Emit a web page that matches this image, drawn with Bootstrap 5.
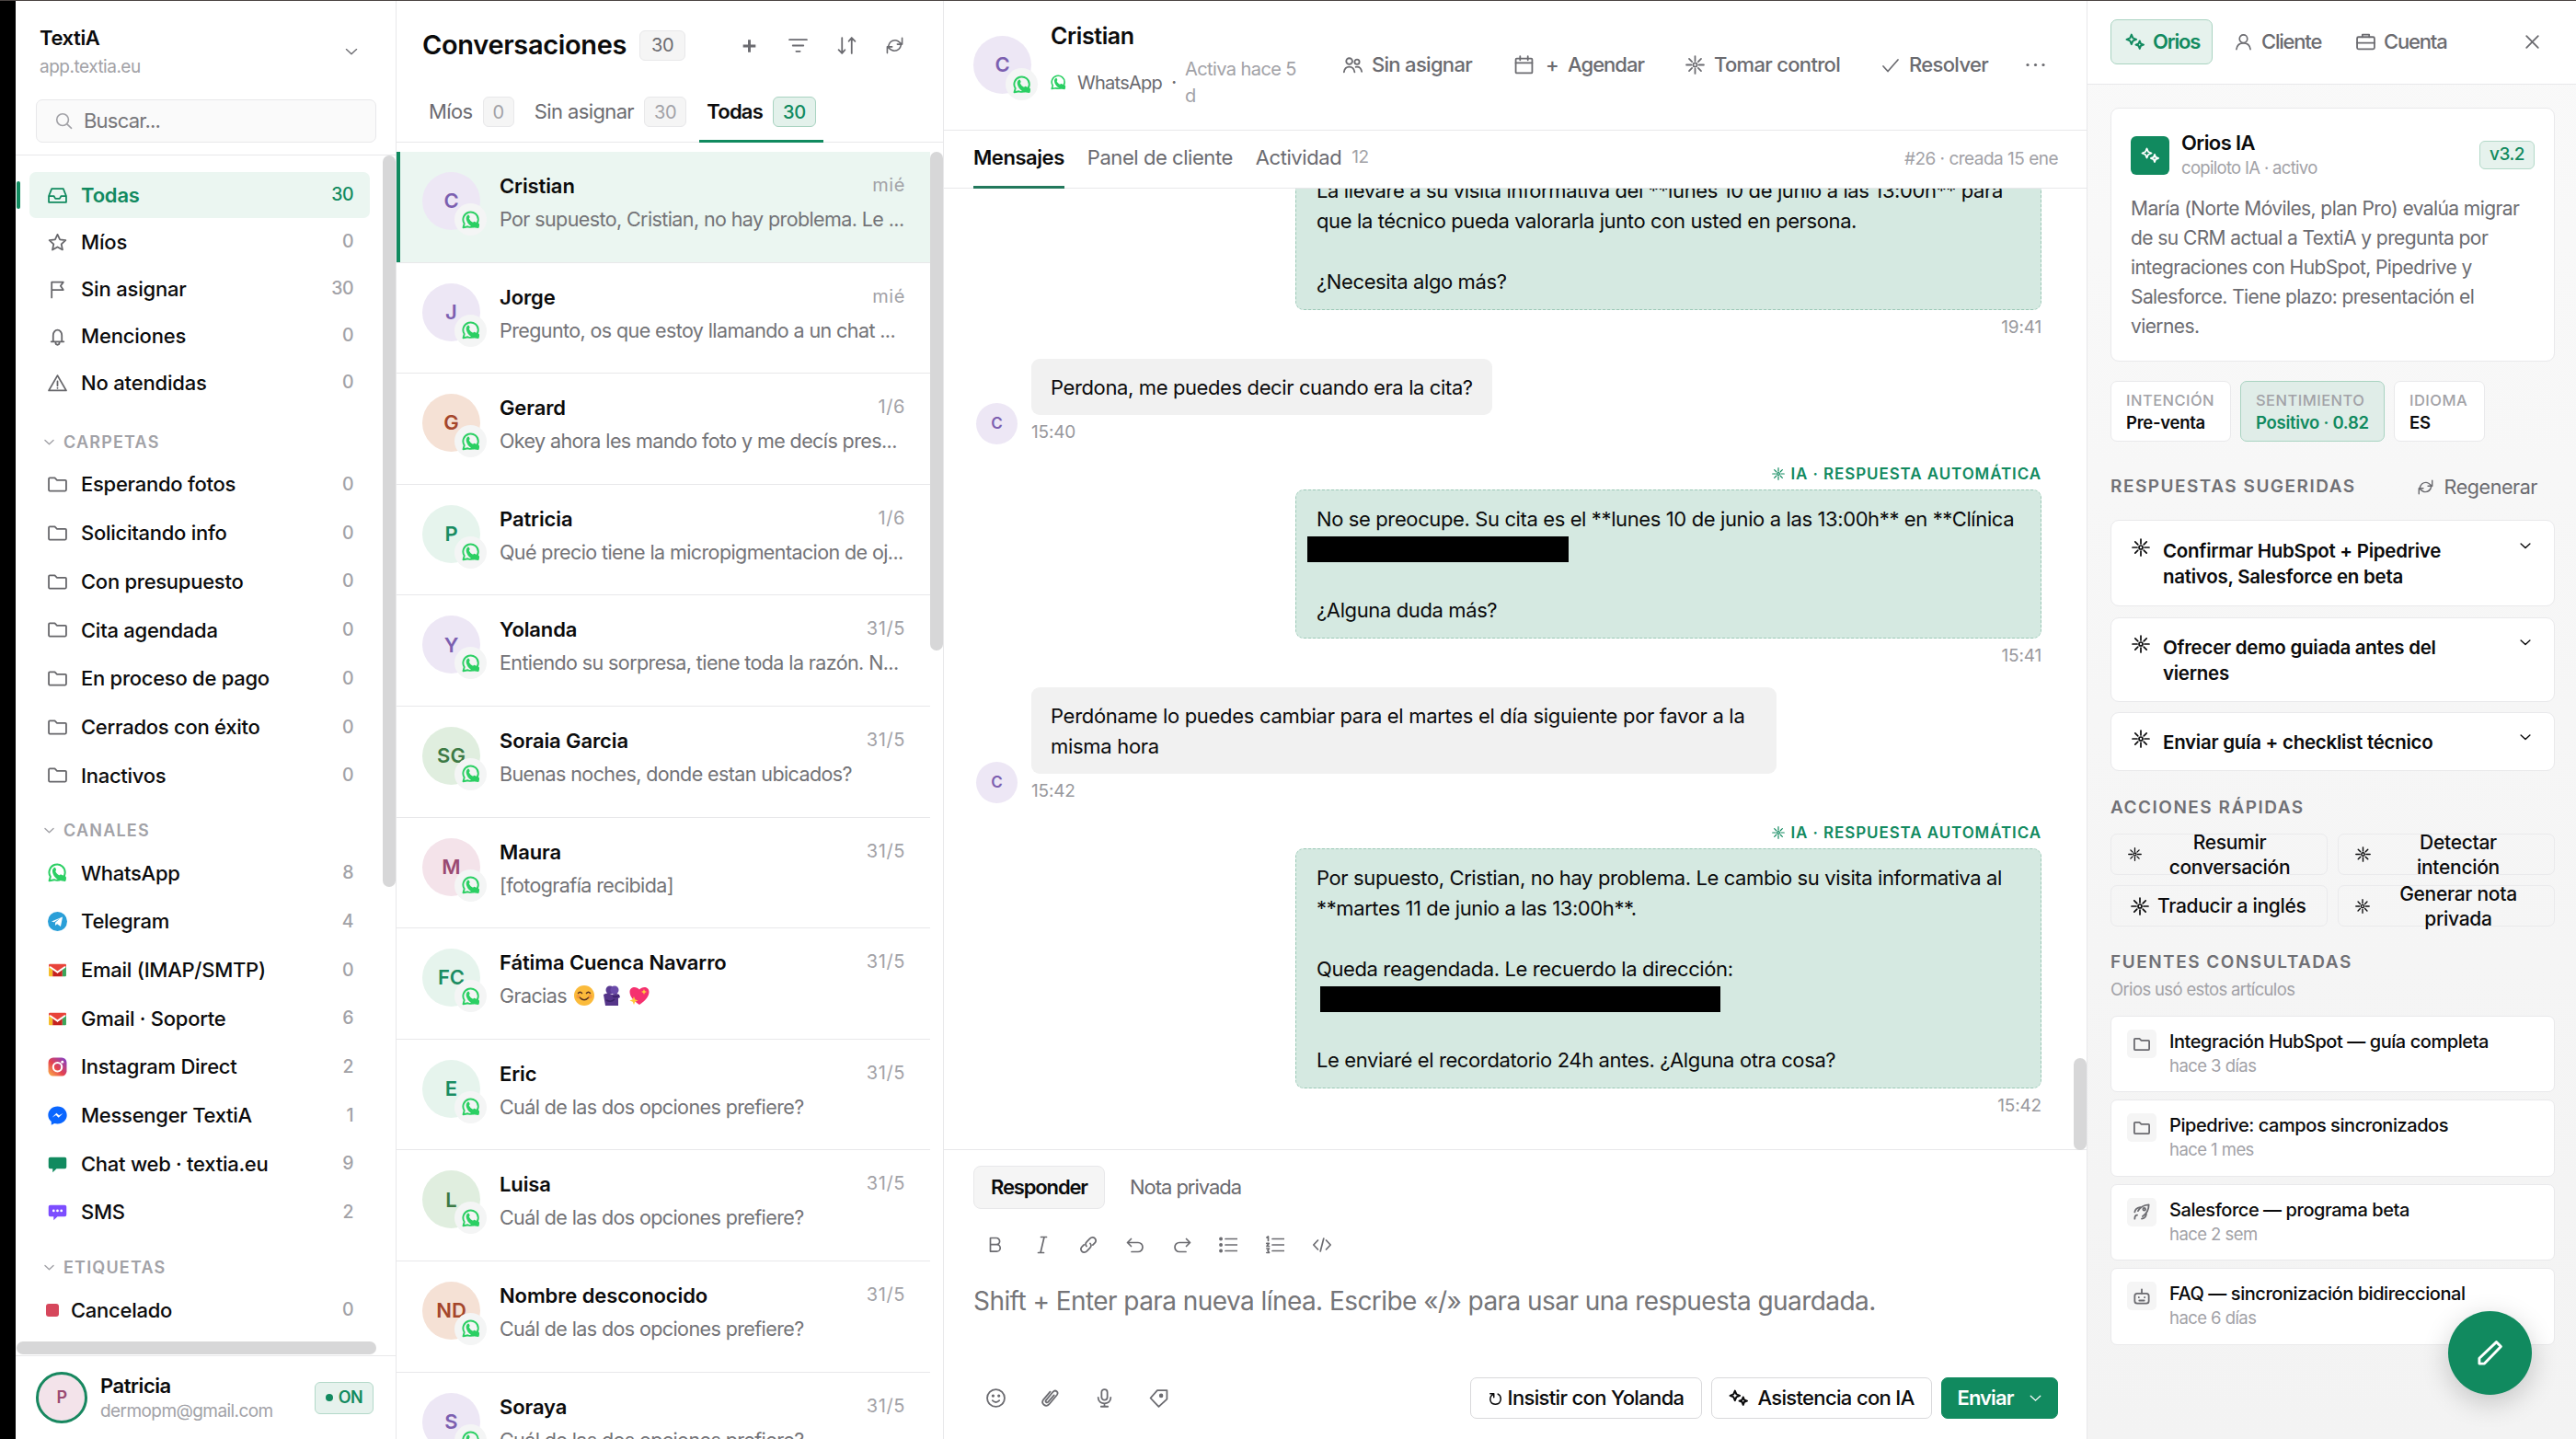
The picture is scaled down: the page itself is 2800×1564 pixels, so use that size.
<!DOCTYPE html>
<html lang="es">
<head>
<meta charset="utf-8">
<title>TextiA · Conversaciones</title>
<meta name="viewport" content="width=device-width, initial-scale=1">
<link rel="stylesheet" href="https://cdn.jsdelivr.net/npm/bootstrap@5.3.0/dist/css/bootstrap.min.css">
<style>
:root{--brand:#118a5f;--ink:#0b0b0c;--mid:#6b6b70;--soft:#a2a2a7;--line:#e8e8ea;--tint:#ebf6f1}
html,body{height:100%}
body{font-family:Inter,"Liberation Sans",sans-serif;font-size:22px;line-height:1.3;color:var(--ink);background:#fff;letter-spacing:-.02em;overflow:hidden}
svg{display:block;flex:none}
.ic{width:21px;height:21px;fill:none;stroke:currentColor;stroke-width:1.7;stroke-linecap:round;stroke-linejoin:round}
.app{height:1564px;width:2800px}
.topline{height:1px;background:#4a4442;z-index:9}
.gutter{width:17px;background:#000}
.t-mid{color:var(--mid)}.t-soft{color:var(--soft)}.t-brand{color:var(--brand)}
.sub19{font-size:19px;letter-spacing:-.03em}
.thumb{position:absolute;background:#d7d7d8;border-radius:8px}
/* sidebar */
.side{width:414px;border-right:1px solid var(--line)}
.side-head{height:169px;border-bottom:1px solid var(--line);padding:27px 21px 0 22px}
.ws-name{font-size:22px;line-height:28px;letter-spacing:-.018em}
.ws-sub{font-size:19px;line-height:24px;margin-top:6px;letter-spacing:-.026em}
.search-box{height:47px;margin-top:23px;border:1px solid var(--line);border-radius:7px;background:#fafafa;padding-left:20px;gap:12px;color:#77777b;letter-spacing:-.035em}
.nav-main{padding-top:18px;padding-bottom:5px}
.nav-row{height:50px;margin:0 28px 1px 15px;padding:0 18px 0 20px;border-radius:7px;font-weight:500;font-size:22px;letter-spacing:-.008em;gap:15px}
.nav-row .cnt{color:var(--soft);font-size:19.5px;font-weight:500;letter-spacing:-.03em}
.nav-row>svg{color:#66666a}
.nav-row.on{background:var(--tint);color:var(--brand);font-weight:600}
.nav-row.on svg,.nav-row.on .cnt{color:var(--brand)}
.nav-row.on::before{content:"";position:absolute;left:1px;width:4px;height:30px;border-radius:2px;background:var(--brand)}
.nav-row.sub{height:52.7px;margin-bottom:0;letter-spacing:-.012em}
.grp{height:40.4px;margin-top:13px;padding-left:30px;gap:9px;font-size:18px;font-weight:600;letter-spacing:.066em;color:var(--soft)}
.side-foot{height:91px;border-top:1px solid var(--line);padding:0 24px 0 22px}
.me{width:56px;height:56px;border-radius:50%;border:3px solid #17875f;background:#f3e3ea;color:#9a4a72;font-size:18px;font-weight:600}
.pill-on{width:64px;height:35px;border:1px solid #b3d9c9;border-radius:6px;background:#e6f2ed;color:var(--brand);font-size:18px;font-weight:600;gap:6px}
/* list */
.list-col{width:595px;border-right:1px solid var(--line)}
.list-head{height:85px;padding:13px 43px 0 28px}
.list-title{font-size:29px;font-weight:600;letter-spacing:-.012em}
.cbadge{height:33px;min-width:34px;padding:0 12px;border:1px solid var(--line);border-radius:6px;background:#f5f5f5;font-size:20px;font-weight:400;color:var(--mid);letter-spacing:-.02em}
.tabs{height:70px;border-bottom:1px solid var(--line);padding-left:27px;gap:6px}
.tb{padding:3px 8px 0;gap:11px;color:var(--mid);margin-bottom:-1px;letter-spacing:-.028em}
.tb .cbadge{padding:0 10px;color:var(--soft)}
.tb.on{color:var(--ink);font-weight:600;box-shadow:inset 0 -3px var(--brand);letter-spacing:-.035em}
.tb.on .cbadge{background:#e3f1eb;border-color:#a9d3c1;color:var(--brand);font-weight:500}
.conv{height:120.6px;width:580px;border-bottom:1px solid var(--line);padding:0 28px}
.conv.on{background:var(--tint);box-shadow:inset 4px 0 var(--brand)}
.av{width:63px;height:63px;border-radius:50%;font-size:22px;font-weight:600;letter-spacing:0}
.av .wa{position:absolute;right:-7px;bottom:-6px;width:35px;height:35px;border-radius:50%;background:#f4f5f5}
.c-nm{font-size:22px;font-weight:600;line-height:28px;letter-spacing:-.005em}
.c-pv{font-size:21.5px;line-height:28px;margin-top:8px;color:#737377;letter-spacing:-.028em}
.c-dt{font-size:20px;line-height:26px;letter-spacing:.03em;margin-right:-1px}
.a-v{background:#ede7f5;color:#7c5fb0}.a-o{background:#f5e1d5;color:#a5462b}.a-g{background:#e6f4ed;color:#1a8c62}.a-l{background:#e0eedf;color:#3d7a45}.a-p{background:#f4e3ea;color:#9a4a72}
/* chat */
.chat{width:1243px;border-right:1px solid var(--line)}
.chat-head{height:142px;border-bottom:1px solid var(--line);padding:0 45px 0 32px}
.chat-head .av .wa{bottom:-7px}
.hname{font-size:25px;font-weight:600;line-height:30px;letter-spacing:-.016em;padding-top:1px}
.hbtn{gap:10px;color:var(--mid);font-weight:500;letter-spacing:-.031em;white-space:nowrap}
.chat-tabs{height:63px;border-bottom:1px solid var(--line);padding:0 31px 0 32px}
.ct{margin-right:25px;padding-bottom:14px;padding-top:10px;color:var(--mid);margin-bottom:-1px}
.ct.on{color:var(--ink);font-weight:600;box-shadow:inset 0 -3px #23785c}
.msgs{height:1045px;padding:0 49px 37.5px 35px;overflow:hidden;border-bottom:1px solid var(--line)}
.m-out{align-self:flex-end;width:811px}
.m-in,.m-out{margin-top:24.5px}
.tag-ia{height:20px;margin-bottom:8px;padding-top:2px;font-size:17px;font-weight:600;color:var(--brand);letter-spacing:.053em;gap:6px;white-space:nowrap}
.bub{font-size:22px;line-height:33px;letter-spacing:-.0175em;border-radius:9px;white-space:nowrap}
.m-out .bub{background:#d5e9e1;border:1px dashed #9cc9b7;padding:14.5px 20px 13.5px 22px}
.m-in .bub{background:#f1f1f1;padding:14.5px 21px 13.5px;width:fit-content}
.tm{font-size:19px;line-height:24px;margin-top:6.5px;margin-bottom:-2px;color:#98989d;letter-spacing:-.01em}
.av-s{width:45px;height:45px;margin-bottom:-3px;font-size:17px}
.redact{display:inline-block;background:#000;vertical-align:middle;height:28px;margin-top:-4px}
.redact.r1{width:284px;margin-left:-10px}
.redact.r2{width:435px;margin-left:4px}
.composer{height:313px;padding:17px 31px 0 32px}
.rt{height:47px;padding:0 18px;border:1px solid transparent;border-radius:8px;letter-spacing:-.047em;color:var(--mid)}
.rt.on{background:#f5f5f5;border-color:var(--line);color:var(--ink);font-weight:600;letter-spacing:-.052em}
.tools{height:40px;margin-top:19px;padding-left:14px;gap:30.7px;color:var(--mid)}
.tools .ic{width:20px;height:20px}
.ph{font-size:28px;line-height:38px;margin-top:22px;color:#757578;letter-spacing:-.02em}
.acts{height:45px;margin-top:64px;color:var(--mid)}
.abtn{height:45px;border:1px solid #d9d9db;border-radius:7px;background:#fff;color:var(--ink);font-weight:500;font-size:22px;letter-spacing:-.03em;gap:10px}
.abtn.send{background:var(--brand);border-color:var(--brand);color:#fff;font-weight:600;gap:16px;letter-spacing:-.041em}
/* assistant panel */
.panel{width:531px;background:linear-gradient(#f9f9f9,#f3f3f3)}
.p-head{height:92px;background:#fff;border-bottom:1px solid var(--line);padding:0 37px 0 25px}
.pt{height:49px;border:1px solid transparent;border-radius:7px;color:var(--mid);font-weight:500;letter-spacing:-.055em}
.pt.on{width:111px;background:#e6f2ed;border-color:#a9d3c1;color:var(--brand);font-weight:600;padding-left:15px;gap:9px}
.p-body{padding:25px 23px 0 25px}
.bx{background:#fff;border:1px solid #e9e9eb;border-radius:9px}
.intro{height:276px;padding:24px 21px 0}
.logo{width:42px;height:42px;border-radius:6px;background:var(--brand);color:#fff}
.ver{width:60px;height:31px;border:1px solid #b3d9c9;border-radius:6px;background:#e6f2ed;color:var(--brand);font-size:19px;font-weight:500}
.summary{font-size:21px;line-height:32px;margin-top:16px;color:#6c6c71;letter-spacing:-.028em;white-space:nowrap}
.chip{height:66px;padding:9.5px 16px 0;border-radius:7px}
.chip .k{font-size:16.5px;line-height:20px;font-weight:500;letter-spacing:.028em;color:var(--soft)}
.chip .v{font-size:18.5px;line-height:24px;margin-top:2px;font-weight:600;letter-spacing:-.015em}
.chip.good{background:#e0ede8;border-color:#a9d3c1}
.h-sec{font-size:19px;line-height:26px;font-weight:600;letter-spacing:.079em;color:#707075}
.sug{padding:19px 24px 0 22px;margin-bottom:11.5px;font-size:20.5px;line-height:28px;font-weight:600;letter-spacing:-.013em}
.sug .ic{width:20px;height:20px}
.sug .ic.cv{width:14px;height:14px;margin-top:1px;stroke-width:2}
.qa{height:45px;width:236px;border:1px solid #eaeaec;border-radius:7px;font-size:21px;line-height:27px;font-weight:500;letter-spacing:-.014em}
.src{height:83.4px;padding:14px 17px 0;margin-bottom:8px;border-radius:7px;gap:14px}
.src-ic{width:32px;height:31px;border-radius:5px;background:#f5f5f5;color:var(--mid)}
.src .ic{width:18px;height:18px;stroke-width:2}
.src .n{font-size:20px;line-height:26px;font-weight:500;letter-spacing:-.022em}
.src .d{font-size:18.5px;line-height:24px;margin-top:1px;letter-spacing:-.03em}
.fab{position:absolute;right:48px;bottom:48px;width:91px;height:91px;border-radius:50%;background:var(--brand);color:#fff;box-shadow:0 8px 30px rgba(0,0,0,.2)}
</style>
</head>
<body>
<svg width="0" height="0" class="position-absolute">
<defs>
<symbol id="chev" viewBox="0 0 20 20"><path d="M3 7l7 6.500L17 7"/></symbol>
<symbol id="search" viewBox="0 0 20 20"><circle cx="8.5" cy="8.5" r="6.7"/><path d="M13.5 13.5l5 4.7"/></symbol>
<symbol id="inbox" viewBox="0 0 20 20"><path d="M1 10.5L4 3h12l3 7.5V17H1zM1 10.5h5.2l1.6 2.7h4.4l1.6-2.7H19"/></symbol>
<symbol id="star" viewBox="0 0 20 20"><path d="M10 1.8l2.5 5.3 5.9.7-4.4 4 1.2 5.8L10 14.7l-5.2 2.9L6 11.8l-4.4-4 5.9-.7z"/></symbol>
<symbol id="flag" viewBox="0 0 20 20"><path d="M4 18.5V2.5h12l-2.8 4 2.8 4H4"/></symbol>
<symbol id="bell" viewBox="0 0 20 20"><path d="M3.500 15.500h13M5.500 15.500V9a4.500 5.500 0 0 1 9 0v6.500M8 15.500v1a2 2.300 0 0 0 4 0v-1"/></symbol>
<symbol id="warn" viewBox="0 0 20 20"><path d="M10 2l9 15.500H1zM10 8v4.500M10 14.800v.2"/></symbol>
<symbol id="folder" viewBox="0 0 20 20"><path d="M1 15.500V4.200q0-1 1-1h5.200l2.300 2.300H18q1 0 1 1v9q0 1.200-1 1.200H2q-1 0-1-1.200z"/></symbol>
<symbol id="wapp" viewBox="0 0 20 20"><path d="M1.500 18.300l1.200-4.200A8.200 8.200 0 1 1 6.600 17.300z" fill="none" stroke="#2bcf63" stroke-width="1.900" stroke-linejoin="round"/><path d="M6.200 4.900c.8-.7 1.500-.4 1.800.4l.6 1.500c.3.700-.9 1.200-.7 1.800.9 2 2 3.200 3.800 4 .7.300 1.200-1 1.900-.8l5 2.300c.7.400.5 4.700-.7 5l-5.400-.9C8.700 17 4.600 12 4.700 8c0-1.300.7-2.400 1.500-3.100z" fill="#2bcf63" stroke="none"/><path d="M12.500 17.200q3.500-.7 4.800-4" fill="none" stroke="#2bcf63" stroke-width="2"/></symbol>
<symbol id="tele" viewBox="0 0 20 20"><circle cx="10" cy="10" r="10" fill="#2a9fd8"/><path d="M3.800 9.900l11.500-4.700-2 10-3.700-2.700-2 1.900.1-3.300 5-4.400-6.200 3.900z" fill="#fff"/></symbol>
<symbol id="gmail" viewBox="0 0 20 20"><path d="M1 6l4 3v7.500H2q-1 0-1-1z" fill="#f6bd27"/><path d="M19 6l-4 3v7.500h3q1 0 1-1z" fill="#3ba55a"/><path d="M5 9l5 4 5-4v7.500H5z" fill="#c5221f"/><path d="M1 4.500q0-1 1-1h16q1 0 1 1v1.500L10 12.500 1 6z" fill="#e8433a"/><path d="M2 6.500L10 12l8-5.500" fill="none" stroke="#fff" stroke-width="1.800"/></symbol>
<symbol id="insta" viewBox="0 0 20 20"><defs><linearGradient id="ig" x1="0" y1="1" x2="1" y2="0"><stop offset="0" stop-color="#fdb64a"/><stop offset=".45" stop-color="#e5414f"/><stop offset="1" stop-color="#7b3fd0"/></linearGradient></defs><rect x=".5" y=".5" width="19" height="19" rx="5" fill="url(#ig)"/><circle cx="10" cy="10.200" r="4.500" fill="none" stroke="#fff" stroke-width="2"/><circle cx="15" cy="5" r="1.400" fill="#fff"/></symbol>
<symbol id="mess" viewBox="0 0 20 20"><path d="M10 .5C4.500.5.300 4.500.300 9.500c0 2.700 1.300 5 3.300 6.600v3.700l3.200-1.700c1 .3 2 .4 3.200.4 5.500 0 9.700-4 9.700-9S15.500.5 10 .5z" fill="#0a66ff"/><path d="M4.500 11.800l4.400-4.500 2.700 2.500 4-2.300-4.500 4.600-2.600-2.500z" fill="#fff"/></symbol>
<symbol id="webchat" viewBox="0 0 20 20"><path d="M2.500 2.500h15q1.800 0 1.800 1.800v8.400q0 1.800-1.800 1.800H9l-4 3.800v-3.800H2.500Q.700 14.500.700 12.700V4.300q0-1.800 1.800-1.800z" fill="#118a5f"/></symbol>
<symbol id="sms" viewBox="0 0 20 20"><path d="M2.500 2.500h15q1.800 0 1.800 1.800v8.400q0 1.800-1.800 1.800H10l-4 3.800v-3.800H2.500Q.700 14.500.700 12.700V4.300q0-1.800 1.800-1.800z" fill="#7c4dff"/><g fill="#fff"><circle cx="6" cy="8.500" r="1.300"/><circle cx="10" cy="8.500" r="1.300"/><circle cx="14" cy="8.500" r="1.300"/></g></symbol>
<symbol id="filter" viewBox="0 0 20 20"><path d="M1 4h18M4.500 10h11M8 16h4"/></symbol>
<symbol id="sort" viewBox="0 0 20 20"><path d="M5 2v16M1.500 14.500L5 18l3-3.500M15 18V2M12 5.500L15 2l3.500 3.500"/></symbol>
<symbol id="refresh" viewBox="0 0 20 20"><path d="M1.500 18.500v-7h5.500M18.500 1.500v7H13M2.500 11.500C3.500 7 6.500 4 10.500 4c3 0 4.500 1.500 7.300 4.300M17.500 8.500c-1 4.500-4 7.500-8 7.500-3 0-4.500-1.500-7.300-4.300"/></symbol>
<symbol id="users" viewBox="0 0 20 20"><circle cx="6.300" cy="6.300" r="3.200"/><circle cx="14.300" cy="7" r="2.500"/><path d="M.8 17.500c.5-3.500 2.500-5.500 5.500-5.500s5 2 5.500 5.500M13 12.200c3.500-.6 5.500 1.300 6.200 4.800"/></symbol>
<symbol id="cal" viewBox="0 0 20 20"><rect x="1.500" y="3.500" width="17" height="15" rx="1"/><path d="M1.500 8h17M6 1v4M14 1v4"/></symbol>
<symbol id="spark" viewBox="0 0 20 20"><circle cx="10" cy="10" r="2"/><path d="M10 1v5M10 14v5M1 10h5M14 10h5M3.800 3.800l3 3M13.200 13.200l3 3M16.200 3.800l-3 3M6.800 13.200l-3 3"/></symbol>
<symbol id="check" viewBox="0 0 20 20"><path d="M2 11l5 5.500L18 4"/></symbol>
<symbol id="stars" viewBox="0 0 20 20"><path d="M6.500 2.500l1.500 3.500 3.500 1.500L8 9l-1.500 3.500L5 9 1.500 7.500 5 6zM15 9l1.100 2.900L19 13l-2.900 1.100L15 17l-1.100-2.900L11 13l2.900-1.100z" stroke-width="1.900"/></symbol>
<symbol id="user" viewBox="0 0 20 20"><circle cx="10" cy="6.500" r="4.500"/><path d="M2 18.500c.7-4.500 3.500-7 8-7s7.300 2.500 8 7"/></symbol>
<symbol id="brief" viewBox="0 0 20 20"><rect x="1" y="5" width="18" height="12.500" rx="1.500"/><path d="M1 11h18M6.500 5V2.500h7V5"/></symbol>
<symbol id="x" viewBox="0 0 20 20"><path d="M4 4l12 12M16 4L4 16"/></symbol>
<symbol id="bold" viewBox="0 0 20 20"><path d="M4.500 2.500h6.500a3.600 3.600 0 0 1 0 7.200H4.500zM4.500 9.700h7a3.700 3.700 0 0 1 0 7.400h-7z"/></symbol>
<symbol id="ital" viewBox="0 0 20 20"><path d="M8.500 1.500h6M5.500 18.500h6M12 1.500l-4 17"/></symbol>
<symbol id="link" viewBox="0 0 20 20"><path d="M8 11.500c-1.300-1.500-1-3.500.3-4.800l3.400-3.600c1.600-1.600 4-1.600 5.300-.2 1.400 1.500 1.300 3.700-.2 5.200l-2 2M12 8.500c1.300 1.500 1 3.500-.3 4.800l-3.400 3.600c-1.600 1.600-4 1.600-5.300.2-1.400-1.500-1.300-3.700.2-5.200l2-2"/></symbol>
<symbol id="undo" viewBox="0 0 20 20"><path d="M5.500 3.500L1.500 7.500l4 4M1.500 7.500H13a5 5 0 0 1 0 10H6"/></symbol>
<symbol id="redo" viewBox="0 0 20 20"><path d="M14.500 3.500l4 4-4 4M18.500 7.500H7a5 5 0 0 0 0 10h7"/></symbol>
<symbol id="ul" viewBox="0 0 20 20"><path d="M7 3.500h13M7 10h13M7 16.500h13"/><path d="M2 3.500h.1M2 10h.1M2 16.500h.1" stroke-width="3.800"/></symbol>
<symbol id="ol" viewBox="0 0 20 20"><path d="M7 3.500h13M7 10h13M7 16.500h13M1 2l1.500-1v4.500M.8 8.300h2.500L1 11.500h2.500M.8 14h2.700L2 16l1.500 2.500H.8"/></symbol>
<symbol id="code" viewBox="0 0 20 20"><path d="M5.500 5L.8 10l4.700 5M14.500 5l4.700 5-4.700 5M11.800 3L8.200 17"/></symbol>
<symbol id="smile" viewBox="0 0 20 20"><circle cx="10" cy="10" r="9"/><path d="M6.500 12.500q3.500 3.500 7 0"/><path d="M7 7.700h.1M13 7.700h.1" stroke-width="3"/></symbol>
<symbol id="clip" viewBox="0 0 20 20"><path d="M14 7l-6 7c-1.500 1.500-3.500-.2-2.300-1.800l7.200-8.600c2.600-2.800 6.300.3 4 3.300l-8 9.500c-3.500 3.800-9-.7-5.800-4.900L10 3.500"/></symbol>
<symbol id="mic" viewBox="0 0 20 20"><rect x="7" y="1" width="6" height="11" rx="3"/><path d="M3.500 9.500c0 8 13 8 13 0M10 15.500v3M6.500 18.800h7"/></symbol>
<symbol id="tag" viewBox="0 0 20 20"><path d="M1.500 10L8.500 2h10V11L10 19z"/><circle cx="12.500" cy="7.500" r="1.300" fill="currentColor"/></symbol>
<symbol id="rocket" viewBox="0 0 20 20"><path d="M5.500 9C8 4.500 12 2 18.500 1.500 18.500 8 16 12.500 11 15.500M8 4.500C4 5 2 7 1.500 10.500M15.500 12C15.500 15.500 13.500 18 10 18.500M1.500 18.500c0-3 1-4.500 3-4.500"/><circle cx="13" cy="7" r="1.500"/></symbol>
<symbol id="bot" viewBox="0 0 20 20"><rect x="1.500" y="6.500" width="17" height="12" rx="3"/><path d="M10 6.500V1.500M7 15h6M6.500 11v.3M13.500 11v.3"/></symbol>
<symbol id="pen" viewBox="0 0 20 20"><path d="M2 18v-4L14.800 1.800l3.400 3.400L5.800 18z"/></symbol>
<symbol id="e-smile" viewBox="0 0 22 22"><circle cx="11" cy="11" r="11" fill="#fbbb3b"/><path d="M4.500 8.500q2-2.500 4 0M13.500 8.500q2-2.500 4 0M6 13q5 5.500 10 0" fill="none" stroke="#5b3420" stroke-width="1.600" stroke-linecap="round"/><circle cx="4.500" cy="12" r="2.200" fill="#f78a3c" opacity=".6"/><circle cx="17.500" cy="12" r="2.200" fill="#f78a3c" opacity=".6"/></symbol>
<symbol id="e-hug" viewBox="0 0 22 22"><circle cx="9" cy="5" r="4.500" fill="#5a3b93"/><circle cx="14" cy="5" r="4.500" fill="#6a4aa8"/><path d="M2 10q4-3 9 0 5-2 8 0l1 3-2 1v8H4l-1-6z" fill="#553589"/><path d="M5 16q5 3 9-1M12 12q4 1 7-1" fill="none" stroke="#3b2368" stroke-width="1.600"/></symbol>
<symbol id="e-heart" viewBox="0 0 22 22"><path d="M11 21C4 16 .5 12 .5 7 .5 1 8 .5 11 4.500 14 .5 21.500 1 21.500 7c0 5-3.500 9-10.500 14z" fill="#f5316f"/><path d="M5 12l1.300 3.200L9.500 16.500 6.300 17.800 5 21l-1.300-3.200L.5 16.500l3.200-1.300zM16 4l.9 2.100L19 7l-2.100.9L16 10l-.9-2.100L13 7l2.100-.9z" fill="#ffc93c"/></symbol>
</defs>
</svg>

<div class="topline position-absolute top-0 start-0 w-100"></div>
<div class="app d-flex">
  <div class="gutter flex-shrink-0"></div>

  <aside class="side d-flex flex-column flex-shrink-0 position-relative">
    <div class="side-head flex-shrink-0">
      <div class="d-flex align-items-center justify-content-between pe-3">
        <div class="ps-1">
          <div class="ws-name fw-semibold">TextiA</div>
          <div class="ws-sub t-soft">app.textia.eu</div>
        </div>
        <svg class="ic t-mid" style="width:16px;height:16px;margin-right:3px"><use href="#chev"/></svg>
      </div>
      <div class="search-box d-flex align-items-center"><svg class="ic t-soft" style="width:19px;height:19px"><use href="#search"/></svg><span>Buscar...</span></div>
    </div>
    <nav class="flex-grow-1 overflow-hidden" id="nav"></nav>
    <div class="thumb" style="right:0;top:169px;width:14px;height:795px"></div>
    <div class="thumb" style="left:1px;top:1458px;width:391px;height:14px"></div>
    <div class="side-foot flex-shrink-0 d-flex align-items-center">
      <div class="me d-flex align-items-center justify-content-center flex-shrink-0">P</div>
      <div class="flex-grow-1" style="margin-left:14px">
        <div class="fw-semibold" style="line-height:28px">Patricia</div>
        <div class="sub19 t-soft" style="line-height:27px">dermopm@gmail.com</div>
      </div>
      <div class="pill-on d-flex align-items-center justify-content-center"><svg width="8" height="8"><circle cx="4" cy="4" r="4" fill="#118a5f"/></svg>ON</div>
    </div>
  </aside>

  <section class="list-col d-flex flex-column flex-shrink-0 position-relative">
    <div class="list-head flex-shrink-0 d-flex align-items-center">
      <h1 class="list-title mb-0">Conversaciones</h1>
      <span class="cbadge d-flex align-items-center justify-content-center" style="margin-left:14px">30</span>
      <div class="d-flex align-items-center ms-auto t-mid" style="gap:32px">
        <svg class="ic" viewBox="0 0 20 20"><path d="M10 4v13M3.500 10.500h13" stroke-width="2.800" stroke-linecap="butt"/></svg>
        <svg class="ic"><use href="#filter"/></svg>
        <svg class="ic"><use href="#sort"/></svg>
        <svg class="ic" style="width:19px;height:19px"><use href="#refresh"/></svg>
      </div>
    </div>
    <div class="tabs d-flex flex-shrink-0">
      <div class="tb d-flex align-items-center">Míos<span class="cbadge d-flex align-items-center">0</span></div>
      <div class="tb d-flex align-items-center">Sin asignar<span class="cbadge d-flex align-items-center">30</span></div>
      <div class="tb on d-flex align-items-center">Todas<span class="cbadge d-flex align-items-center">30</span></div>
    </div>
    <div class="flex-grow-1 overflow-hidden" style="padding-top:10px" id="convs"></div>
    <div class="thumb" style="right:0;top:165px;width:14px;height:542px"></div>
  </section>

  <main class="chat d-flex flex-column flex-shrink-0 position-relative">
    <header class="chat-head d-flex align-items-center flex-shrink-0">
      <div class="av a-v position-relative d-flex align-items-center justify-content-center flex-shrink-0">C<span class="wa d-flex align-items-center justify-content-center"><svg width="20" height="20"><use href="#wapp"/></svg></span></div>
      <div style="margin-left:21px;width:285px">
        <div class="hname">Cristian</div>
        <div class="d-flex align-items-center" style="margin-top:7px">
          <svg width="17" height="17"><use href="#wapp"/></svg>
          <span class="t-mid" style="font-size:20px;margin-left:12px;letter-spacing:-.037em">WhatsApp</span><span class="t-mid" style="margin:0 9px 0 10px">·</span>
          <span class="t-soft" style="font-size:20px;line-height:29px;letter-spacing:-.029em">Activa hace 5<br>d</span>
        </div>
      </div>
      <div class="d-flex align-items-center ms-auto">
        <div class="hbtn d-flex align-items-center"><svg class="ic"><use href="#users"/></svg>Sin asignar</div>
        <div class="hbtn d-flex align-items-center" style="margin-left:46px"><svg class="ic"><use href="#cal"/></svg><span style="margin:0 0 0 3px">+</span><span style="letter-spacing:-.045em">Agendar</span></div>
        <div class="hbtn d-flex align-items-center" style="margin-left:45px"><svg class="ic"><use href="#spark"/></svg>Tomar control</div>
        <div class="hbtn d-flex align-items-center" style="margin-left:45px"><svg class="ic" style="width:20px;height:20px"><use href="#check"/></svg>Resolver</div>
        <svg width="21" height="5" fill="#6b6b70" style="margin-left:41px"><circle cx="2" cy="2.500" r="1.600"/><circle cx="10.500" cy="2.500" r="1.600"/><circle cx="19" cy="2.500" r="1.600"/></svg>
      </div>
    </header>
    <div class="chat-tabs d-flex flex-shrink-0">
      <div class="ct on d-flex align-items-center">Mensajes</div>
      <div class="ct d-flex align-items-center">Panel de cliente</div>
      <div class="ct d-flex align-items-center">Actividad<span class="t-soft" style="font-size:19px;margin-left:11px">12</span></div>
      <div class="ms-auto align-self-center t-soft" style="font-size:19px;letter-spacing:-.027em">#26 · creada 15 ene</div>
    </div>
    <div class="msgs d-flex flex-column justify-content-end flex-shrink-0">
      <div class="m-out">
        <div class="bub">La llevaré a su visita informativa del **lunes 10 de junio a las 13:00h** para<br>que la técnico pueda valorarla junto con usted en persona.<br><br>¿Necesita algo más?</div>
        <div class="tm text-end">19:41</div>
      </div>
      <div class="m-in d-flex align-items-end">
        <div class="av av-s a-v d-flex align-items-center justify-content-center">C</div>
        <div style="margin-left:15px"><div class="bub">Perdona, me puedes decir cuando era la cita?</div><div class="tm">15:40</div></div>
      </div>
      <div class="m-out">
        <div class="tag-ia d-flex align-items-center justify-content-end"><svg class="ic" style="width:14px;height:14px"><use href="#spark"/></svg>IA · RESPUESTA AUTOMÁTICA</div>
        <div class="bub">No se preocupe. Su cita es el **lunes 10 de junio a las 13:00h** en **Clínica<br><span class="redact r1"></span><br><br>¿Alguna duda más?</div>
        <div class="tm text-end">15:41</div>
      </div>
      <div class="m-in d-flex align-items-end">
        <div class="av av-s a-v d-flex align-items-center justify-content-center">C</div>
        <div style="margin-left:15px"><div class="bub" style="width:810px;letter-spacing:-.014em">Perdóname lo puedes cambiar para el martes el día siguiente por favor a la<br>misma hora</div><div class="tm">15:42</div></div>
      </div>
      <div class="m-out">
        <div class="tag-ia d-flex align-items-center justify-content-end"><svg class="ic" style="width:14px;height:14px"><use href="#spark"/></svg>IA · RESPUESTA AUTOMÁTICA</div>
        <div class="bub">Por supuesto, Cristian, no hay problema. Le cambio su visita informativa al<br>**martes 11 de junio a las 13:00h**.<br><br>Queda reagendada. Le recuerdo la dirección:<br><span class="redact r2"></span><br><br>Le enviaré el recordatorio 24h antes. ¿Alguna otra cosa?</div>
        <div class="tm text-end">15:42</div>
      </div>
    </div>
    <div class="thumb" style="right:0;top:1150px;width:14px;height:100px"></div>
    <div class="composer">
      <div class="d-flex" style="gap:8px">
        <div class="rt on d-flex align-items-center">Responder</div>
        <div class="rt d-flex align-items-center">Nota privada</div>
      </div>
      <div class="tools d-flex align-items-center">
        <svg class="ic"><use href="#bold"/></svg><svg class="ic"><use href="#ital"/></svg><svg class="ic"><use href="#link"/></svg><svg class="ic"><use href="#undo"/></svg><svg class="ic"><use href="#redo"/></svg><svg class="ic"><use href="#ul"/></svg><svg class="ic"><use href="#ol"/></svg><svg class="ic"><use href="#code"/></svg>
      </div>
      <div class="ph">Shift + Enter para nueva línea. Escribe «/» para usar una respuesta guardada.</div>
      <div class="acts d-flex align-items-center">
        <div class="d-flex" style="padding-left:14px;gap:38px"><svg class="ic"><use href="#smile"/></svg><svg class="ic"><use href="#clip"/></svg><svg class="ic"><use href="#mic"/></svg><svg class="ic"><use href="#tag"/></svg></div>
        <div class="d-flex ms-auto" style="gap:10px">
          <button class="abtn d-flex align-items-center justify-content-center p-0" style="width:252px;gap:6px"><svg class="ic" viewBox="0 0 17 20" style="width:15px;height:18px"><path d="M2 4h4.500v4.500M11.500 4.500c5.500 3 4.500 12.500-3 12.500C.500 17 .500 7.500 6 4.500"/></svg>Insistir con Yolanda</button>
          <button class="abtn d-flex align-items-center justify-content-center p-0" style="width:240px"><svg class="ic"><use href="#stars"/></svg>Asistencia con IA</button>
          <button class="abtn send d-flex align-items-center justify-content-center p-0" style="width:127px"><span>Enviar</span><svg class="ic" style="width:15px;height:15px"><use href="#chev"/></svg></button>
        </div>
      </div>
    </div>
  </main>

  <aside class="panel position-relative">
    <div class="p-head d-flex align-items-center">
      <div class="pt on d-flex align-items-center"><svg class="ic"><use href="#stars"/></svg>Orios</div>
      <div class="pt d-flex align-items-center" style="margin-left:23px;gap:10px"><svg class="ic" style="width:19px;height:19px"><use href="#user"/></svg>Cliente</div>
      <div class="pt d-flex align-items-center" style="margin-left:36px;gap:9px"><svg class="ic"><use href="#brief"/></svg>Cuenta</div>
      <svg class="ic t-mid ms-auto"><use href="#x"/></svg>
    </div>
    <div class="p-body">
      <div class="bx intro">
        <div class="d-flex align-items-center">
          <div class="logo d-flex align-items-center justify-content-center"><svg class="ic" style="width:20px;height:20px"><use href="#stars"/></svg></div>
          <div style="margin-left:13px">
            <div class="fw-semibold" style="line-height:27px;letter-spacing:-.027em">Orios IA</div>
            <div class="t-soft" style="font-size:18.5px;line-height:26px;letter-spacing:-.037em">copiloto IA · activo</div>
          </div>
          <span class="ver ms-auto d-flex align-items-center justify-content-center">v3.2</span>
        </div>
        <div class="summary">María (Norte Móviles, plan Pro) evalúa migrar<br>de su CRM actual a TextiA y pregunta por<br>integraciones con HubSpot, Pipedrive y<br>Salesforce. Tiene plazo: presentación el<br>viernes.</div>
      </div>
      <div class="d-flex" style="gap:10px;margin-top:21px">
        <div class="bx chip" style="width:131px"><div class="k">INTENCIÓN</div><div class="v">Pre-venta</div></div>
        <div class="bx chip good" style="width:157px"><div class="k">SENTIMIENTO</div><div class="v t-brand">Positivo · 0.82</div></div>
        <div class="bx chip" style="width:99px"><div class="k">IDIOMA</div><div class="v">ES</div></div>
      </div>
      <div class="d-flex align-items-center" style="margin-top:35px;padding-right:19px">
        <div class="h-sec">RESPUESTAS SUGERIDAS</div>
        <div class="ms-auto d-flex align-items-center t-mid" style="gap:12px;font-size:21.5px;line-height:28px;letter-spacing:-.02em"><svg class="ic" style="width:17px;height:17px"><use href="#refresh"/></svg>Regenerar</div>
      </div>
      <div style="margin-top:22px">
        <div class="bx sug d-flex align-items-start" style="height:94px"><svg class="ic"><use href="#spark"/></svg><div style="margin-left:14px">Confirmar HubSpot + Pipedrive<br>nativos, Salesforce en beta</div><svg class="ic cv ms-auto"><use href="#chev"/></svg></div>
        <div class="bx sug d-flex align-items-start" style="height:92px;padding-top:18px"><svg class="ic"><use href="#spark"/></svg><div style="margin-left:14px">Ofrecer demo guiada antes del<br>viernes</div><svg class="ic cv ms-auto"><use href="#chev"/></svg></div>
        <div class="bx sug d-flex align-items-start" style="height:64px;padding-top:18px"><svg class="ic"><use href="#spark"/></svg><div style="margin-left:14px">Enviar guía + checklist técnico</div><svg class="ic cv ms-auto"><use href="#chev"/></svg></div>
      </div>
      <div class="h-sec" style="margin-top:27px">ACCIONES RÁPIDAS</div>
      <div class="d-flex flex-wrap" style="gap:11px;margin-top:15px">
        <div class="qa d-flex align-items-center" style="padding-left:18px"><svg class="ic" style="width:15px;height:15px"><use href="#spark"/></svg><div class="flex-grow-1 text-center" style="padding-right:10px">Resumir<br>conversación</div></div>
        <div class="qa d-flex align-items-center" style="padding-left:18px"><svg class="ic" style="width:17px;height:17px"><use href="#spark"/></svg><div class="flex-grow-1 text-center" style="padding-right:9px">Detectar<br>intención</div></div>
        <div class="qa d-flex align-items-center" style="padding-left:21px"><svg class="ic" style="width:20px;height:20px"><use href="#spark"/></svg><div style="margin-left:9px">Traducir a inglés</div></div>
        <div class="qa d-flex align-items-center" style="padding-left:18px"><svg class="ic" style="width:16px;height:16px"><use href="#spark"/></svg><div class="flex-grow-1 text-center" style="padding-right:8px">Generar nota<br>privada</div></div>
      </div>
      <div class="h-sec" style="margin-top:26px">FUENTES CONSULTADAS</div>
      <div class="t-soft" style="font-size:18.500px;line-height:24px;margin-top:4px;letter-spacing:-.035em">Orios usó estos artículos</div>
      <div style="margin-top:17px" id="src"></div>
    </div>
    <div class="fab d-flex align-items-center justify-content-center"><svg class="ic" style="width:29px;height:29px;stroke-width:2"><use href="#pen"/></svg></div>
  </aside>
</div>

<script src="https://cdn.jsdelivr.net/npm/bootstrap@5.3.0/dist/js/bootstrap.bundle.min.js"></script>
<script>
const icon = (id, cls = 'ic') => `<svg class="${cls}" width="21" height="21"><use href="#${id}"/></svg>`;
const row = (id, label, n, cls) => `<div class="nav-row ${cls} d-flex align-items-center">${icon(id, cls === 'sub chan' ? '' : 'ic')}<span class="flex-grow-1">${label}</span><span class="cnt">${n}</span></div>`;
const group = t => `<div class="grp d-flex align-items-center"><svg class="ic" style="width:13px;height:13px;stroke-width:2.200"><use href="#chev"/></svg>${t}</div>`;
document.getElementById('nav').innerHTML =
  '<div class="nav-main">' +
  [['inbox','Todas',30,'on'],['star','Míos',0,''],['flag','Sin asignar',30,''],['bell','Menciones',0,''],['warn','No atendidas',0,'']].map(r => row(...r)).join('') + '</div>' +
  group('CARPETAS') +
  ['Esperando fotos','Solicitando info','Con presupuesto','Cita agendada','En proceso de pago','Cerrados con éxito','Inactivos'].map(t => row('folder', t, 0, 'sub')).join('') +
  group('CANALES') +
  [['wapp','WhatsApp',8],['tele','Telegram',4],['gmail','Email (IMAP/SMTP)',0],['gmail','Gmail · Soporte',6],['insta','Instagram Direct',2],['mess','Messenger TextiA',1],['webchat','Chat web · textia.eu',9],['sms','SMS',2]].map(r => row(...r, 'sub chan')).join('') +
  group('ETIQUETAS') +
  '<div class="nav-row sub d-flex align-items-center" style="gap:13px;padding-left:18px"><svg width="14" height="14"><rect width="14" height="14" rx="3" fill="#d6475c"/></svg><span class="flex-grow-1">Cancelado</span><span class="cnt">0</span></div>';

const gracias = 'Gracias ' + ['e-smile','e-hug','e-heart'].map(e => `<svg class="d-inline-block align-middle" width="22" height="22" style="margin:-4px 5px 0 3px"><use href="#${e}"/></svg>`).join('');
const q = 'Cuál de las dos opciones prefiere?';
document.getElementById('convs').innerHTML = [
  ['C','a-v','Cristian','mié','Por supuesto, Cristian, no hay problema. Le ...'],
  ['J','a-v','Jorge','mié','Pregunto, os que estoy llamando a un chat ...'],
  ['G','a-o','Gerard','1/6','Okey ahora les mando foto y me decís pres...'],
  ['P','a-g','Patricia','1/6','Qué precio tiene la micropigmentacion de oj...'],
  ['Y','a-v','Yolanda','31/5','Entiendo su sorpresa, tiene toda la razón. N...'],
  ['SG','a-l','Soraia Garcia','31/5','Buenas noches, donde estan ubicados?'],
  ['M','a-p','Maura','31/5','[fotografía recibida]'],
  ['FC','a-g','Fátima Cuenca Navarro','31/5',gracias],
  ['E','a-g','Eric','31/5',q],
  ['L','a-l','Luisa','31/5',q],
  ['ND','a-o','Nombre desconocido','31/5',q],
  ['S','a-v','Soraya','31/5',q]
].map(([i, c, n, d, p], k) => `<div class="conv ${k ? '' : 'on'} d-flex">
  <div class="av ${c} position-relative d-flex align-items-center justify-content-center flex-shrink-0" style="margin-top:22px">${i}<span class="wa d-flex align-items-center justify-content-center"><svg width="20" height="20"><use href="#wapp"/></svg></span></div>
  <div class="flex-grow-1 text-nowrap" style="margin:23px 0 0 21px"><div class="d-flex justify-content-between"><span class="c-nm">${n}</span><span class="c-dt t-soft">${d}</span></div><div class="c-pv">${p}</div></div></div>`).join('');

document.getElementById('src').innerHTML = [
  ['folder','Integración HubSpot — guía completa','hace 3 días'],
  ['folder','Pipedrive: campos sincronizados','hace 1 mes'],
  ['rocket','Salesforce — programa beta','hace 2 sem'],
  ['bot','FAQ — sincronización bidireccional','hace 6 días']
].map(([i, n, d]) => `<div class="bx src d-flex"><div class="src-ic d-flex align-items-center justify-content-center">${icon(i)}</div><div><div class="n">${n}</div><div class="d t-soft">${d}</div></div></div>`).join('');
</script>
</body>
</html>
